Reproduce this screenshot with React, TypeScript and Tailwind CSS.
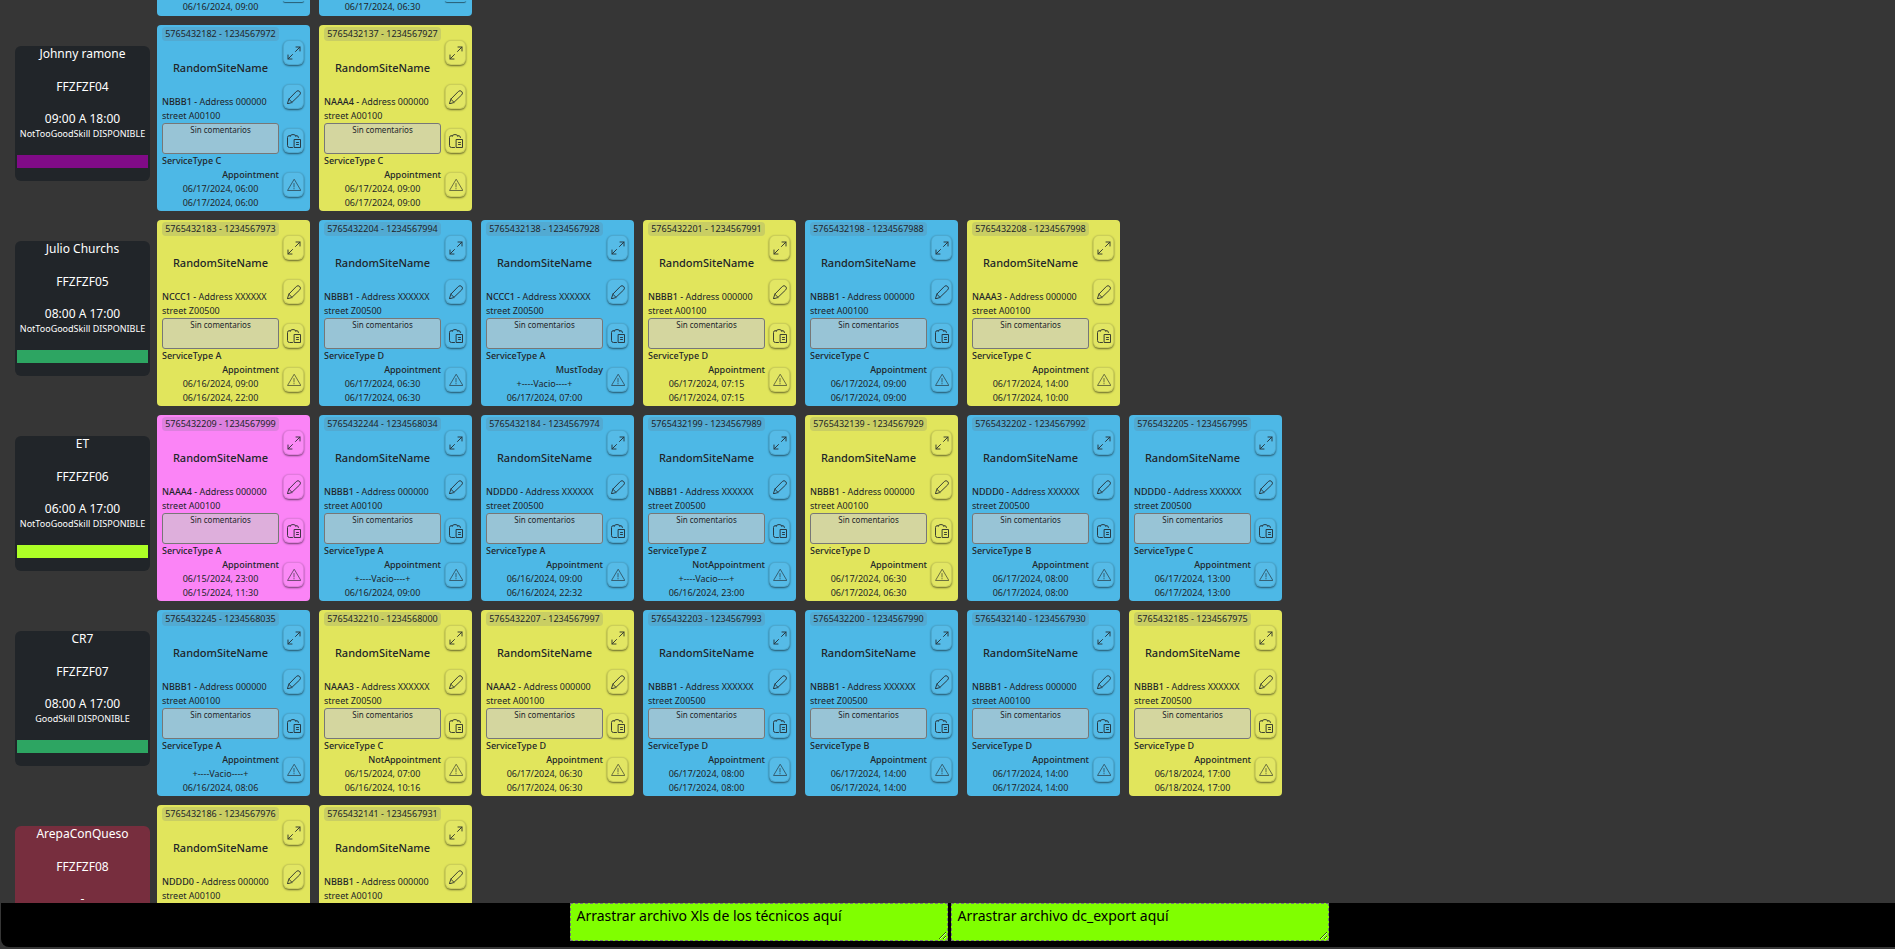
import type { ReactNode } from "react";

type Color = "blue" | "yellow" | "pink";
type Order = {
  color: Color;
  id: string;
  code: string;
  address: "X" | "0";
  street: "Z00500" | "A00100";
  service: string;
  kind: string;
  from: string;
  to: string;
};
type Technician = {
  name: string;
  code: string;
  hours: string;
  skill: string;
  bar: string;
  card: string;
  orders: Order[];
};

const cardColors: Record<Color, string> = {
  blue: "bg-[#4db8e6]",
  yellow: "bg-[#e1e55c]",
  pink: "bg-[#fb84f6]",
};

const EMPTY = "+----Vacio----+";

const order = (
  color: Color,
  id: string,
  code: string,
  address: "X" | "0",
  service: string,
  kind: string,
  from: string,
  to: string,
  street: "Z00500" | "A00100" = address === "X" ? "Z00500" : "A00100",
): Order => ({ color, id, code, address, street, service, kind, from, to });

const technicians: Technician[] = [
  {
    name: "Johnny ramone",
    code: "FFZFZF04",
    hours: "09:00 A 18:00",
    skill: "NotTooGoodSkill DISPONIBLE",
    bar: "bg-[#800b87]",
    card: "bg-[#212529]",
    orders: [
      order("blue", "5765432182 - 1234567972", "NBBB1", "0", "C", "Appointment", "06/17/2024, 06:00", "06/17/2024, 06:00"),
      order("yellow", "5765432137 - 1234567927", "NAAA4", "0", "C", "Appointment", "06/17/2024, 09:00", "06/17/2024, 09:00"),
    ],
  },
  {
    name: "Julio Churchs",
    code: "FFZFZF05",
    hours: "08:00 A 17:00",
    skill: "NotTooGoodSkill DISPONIBLE",
    bar: "bg-[#2da562]",
    card: "bg-[#212529]",
    orders: [
      order("yellow", "5765432183 - 1234567973", "NCCC1", "X", "A", "Appointment", "06/16/2024, 09:00", "06/16/2024, 22:00"),
      order("blue", "5765432204 - 1234567994", "NBBB1", "X", "D", "Appointment", "06/17/2024, 06:30", "06/17/2024, 06:30"),
      order("blue", "5765432138 - 1234567928", "NCCC1", "X", "A", "MustToday", EMPTY, "06/17/2024, 07:00"),
      order("yellow", "5765432201 - 1234567991", "NBBB1", "0", "D", "Appointment", "06/17/2024, 07:15", "06/17/2024, 07:15"),
      order("blue", "5765432198 - 1234567988", "NBBB1", "0", "C", "Appointment", "06/17/2024, 09:00", "06/17/2024, 09:00"),
      order("yellow", "5765432208 - 1234567998", "NAAA3", "0", "C", "Appointment", "06/17/2024, 14:00", "06/17/2024, 10:00"),
    ],
  },
  {
    name: "ET",
    code: "FFZFZF06",
    hours: "06:00 A 17:00",
    skill: "NotTooGoodSkill DISPONIBLE",
    bar: "bg-[#adff26]",
    card: "bg-[#212529]",
    orders: [
      order("pink", "5765432209 - 1234567999", "NAAA4", "0", "A", "Appointment", "06/15/2024, 23:00", "06/15/2024, 11:30"),
      order("blue", "5765432244 - 1234568034", "NBBB1", "0", "A", "Appointment", EMPTY, "06/16/2024, 09:00"),
      order("blue", "5765432184 - 1234567974", "NDDD0", "X", "A", "Appointment", "06/16/2024, 09:00", "06/16/2024, 22:32"),
      order("blue", "5765432199 - 1234567989", "NBBB1", "X", "Z", "NotAppointment", EMPTY, "06/16/2024, 23:00"),
      order("yellow", "5765432139 - 1234567929", "NBBB1", "0", "D", "Appointment", "06/17/2024, 06:30", "06/17/2024, 06:30"),
      order("blue", "5765432202 - 1234567992", "NDDD0", "X", "B", "Appointment", "06/17/2024, 08:00", "06/17/2024, 08:00"),
      order("blue", "5765432205 - 1234567995", "NDDD0", "X", "C", "Appointment", "06/17/2024, 13:00", "06/17/2024, 13:00"),
    ],
  },
  {
    name: "CR7",
    code: "FFZFZF07",
    hours: "08:00 A 17:00",
    skill: "GoodSkill DISPONIBLE",
    bar: "bg-[#2da562]",
    card: "bg-[#212529]",
    orders: [
      order("blue", "5765432245 - 1234568035", "NBBB1", "0", "A", "Appointment", EMPTY, "06/16/2024, 08:06"),
      order("yellow", "5765432210 - 1234568000", "NAAA3", "X", "C", "NotAppointment", "06/15/2024, 07:00", "06/16/2024, 10:16"),
      order("yellow", "5765432207 - 1234567997", "NAAA2", "0", "D", "Appointment", "06/17/2024, 06:30", "06/17/2024, 06:30"),
      order("blue", "5765432203 - 1234567993", "NBBB1", "X", "D", "Appointment", "06/17/2024, 08:00", "06/17/2024, 08:00"),
      order("blue", "5765432200 - 1234567990", "NBBB1", "X", "B", "Appointment", "06/17/2024, 14:00", "06/17/2024, 14:00"),
      order("blue", "5765432140 - 1234567930", "NBBB1", "0", "D", "Appointment", "06/17/2024, 14:00", "06/17/2024, 14:00"),
      order("yellow", "5765432185 - 1234567975", "NBBB1", "X", "D", "Appointment", "06/18/2024, 17:00", "06/18/2024, 17:00"),
    ],
  },
  {
    name: "ArepaConQueso",
    code: "FFZFZF08",
    hours: "-",
    skill: "",
    bar: "",
    card: "bg-[#772e3e]",
    orders: [
      order("yellow", "5765432186 - 1234567976", "NDDD0", "0", "", "", "", ""),
      order("yellow", "5765432141 - 1234567931", "NBBB1", "0", "", "", "", ""),
    ],
  },
];

function Icon({ children, faded = false }: { children: ReactNode; faded?: boolean }) {
  return (
    <svg
      viewBox="0 0 16 16"
      className={faded ? "size-4 opacity-60" : "size-4 opacity-85"}
      fill="none"
      stroke="currentColor"
      strokeWidth="1"
      strokeLinecap="round"
      strokeLinejoin="round"
      aria-hidden="true"
    >
      {children}
    </svg>
  );
}

function CardButton({ label, faded, children }: { label: string; faded?: boolean; children: ReactNode }) {
  return (
    <button
      type="button"
      aria-label={label}
      className="flex h-[25px] w-[21px] items-center justify-center rounded-md border border-black/10 bg-white/5 shadow-[0_1px_2px_rgba(0,0,0,0.55)]"
    >
      <Icon faded={faded}>{children}</Icon>
    </button>
  );
}

function OrderCard({ data }: { data: Order }) {
  return (
    <article
      className={`flex h-[186px] w-[153px] shrink-0 gap-1 rounded pl-[5px] text-[9px] leading-[14px] text-[#212529] ${cardColors[data.color]}`}
    >
      <div className="flex w-[117px] flex-col pt-[2px]">
        <div className="rounded-sm bg-gray-500/20 text-center whitespace-nowrap">{data.id}</div>
        <h3 className="flex h-[54px] items-center justify-center text-[11px] font-medium">RandomSiteName</h3>
        <p className="h-7 whitespace-nowrap">
          <strong className="font-medium">{data.code} - </strong>
          Address {data.address.repeat(6)}
          <br />
          street {data.street}
        </p>
        <div className="h-[31px] rounded-[3px] border border-[#777] bg-[#ccc]/60 text-center text-[8px] leading-3">
          {data.service && "Sin comentarios"}
        </div>
        {data.service && (
          <>
            <div className="font-medium">ServiceType {data.service}</div>
            <div className="text-right font-medium">{data.kind}</div>
            <time className="text-center">{data.from}</time>
            <time className="text-center">{data.to}</time>
          </>
        )}
      </div>
      <div className="flex flex-col gap-[19px] pt-[15px]">
        <CardButton label="Expandir">
          <path d="M10 2h4v4M14 2L9.5 6.5M6 14H2v-4M2 14l4.5-4.5" />
        </CardButton>
        <CardButton label="Editar">
          <path d="M1.5 14.5l1.300-4.300 7.500-7.700a2.400 2.400 0 0 1 3.400 0 2.400 2.400 0 0 1 0 3.400L6 13.300zM2.800 10.200l3.200 3.100" />
        </CardButton>
        <CardButton label="Copiar">
          <path d="M6.500 14.500h-3a2 2 0 0 1-2-2v-8a2 2 0 0 1 2-2M10.500 2.500a2 2 0 0 1 2 2M4 3.500a3 2 0 0 1 6 0M8.500 6.500h6v8h-6zM10.500 9.500h2M10.500 11.500h2" />
        </CardButton>
        <CardButton label="Aviso" faded>
          <path d="M8 2.500L1.500 13.500h13zM8 6.500v3.500M8 11.500v.4" />
        </CardButton>
      </div>
    </article>
  );
}

function CardTail({ date }: { date: string }) {
  return (
    <div className="flex h-4 w-[153px] shrink-0 gap-1 rounded-b bg-[#4db8e6] pl-[5px] text-[9px] leading-[14px] text-[#212529]">
      <time className="w-[117px] text-center">{date}</time>
      <div className="h-[2px] w-[21px] rounded-b-md shadow-[0_1px_1px_rgba(0,0,0,0.5)]" />
    </div>
  );
}

function TechnicianCard({ data }: { data: Technician }) {
  return (
    <section
      className={`mt-[21px] h-[135px] w-[135px] shrink-0 rounded-md px-[2px] text-center text-[12px] leading-4 text-white ${data.card}`}
    >
      <h2 className="mb-[17px]">{data.name}</h2>
      <p className="mb-4">{data.code}</p>
      <p>{data.hours}</p>
      <p className="h-7 text-[9px] leading-[14px] whitespace-nowrap">{data.skill}</p>
      <div className={`h-[13px] ${data.bar}`} />
    </section>
  );
}

function DropArea({ text }: { text: string }) {
  return (
    <textarea
      aria-label={text}
      defaultValue={text}
      className="h-[38px] w-[378px] resize overflow-hidden border border-dashed border-[#767676] bg-[#80ff00] px-[6px] py-[2px] text-[14px] leading-5 text-black outline-none"
    />
  );
}

export default function App() {
  return (
    <div className="flex h-screen flex-col bg-[#363636] pb-[2px] font-['Noto_Sans',sans-serif]">
      <main className="flex min-h-0 flex-1 flex-col gap-[9px] overflow-hidden pl-[15px]">
        <div className="flex shrink-0 gap-[9px] pl-[142px]">
          <CardTail date="06/16/2024, 09:00" />
          <CardTail date="06/17/2024, 06:30" />
        </div>
        {technicians.map((t) => (
          <div key={t.code} className="flex shrink-0 items-start gap-[7px]">
            <TechnicianCard data={t} />
            <div className="flex gap-[9px]">
              {t.orders.map((o) => (
                <OrderCard key={o.id} data={o} />
              ))}
            </div>
          </div>
        ))}
      </main>
      <footer className="ml-px flex h-11 shrink-0 items-start justify-center gap-[3px] rounded-bl-lg bg-black pl-[2px]">
        <DropArea text="Arrastrar archivo Xls de los técnicos aquí" />
        <DropArea text="Arrastrar archivo dc_export aquí" />
      </footer>
    </div>
  );
}
